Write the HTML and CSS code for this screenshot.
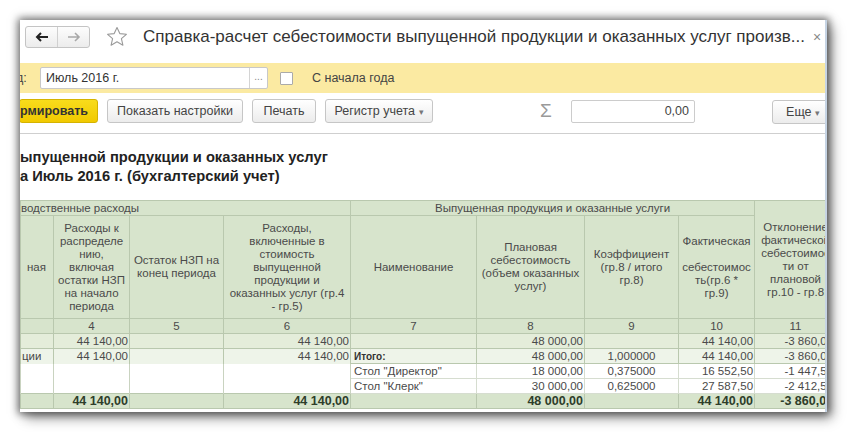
FILE: index.html
```html
<!DOCTYPE html>
<html lang="ru">
<head>
<meta charset="utf-8">
<title>Справка-расчет</title>
<link rel="stylesheet" href="styles.css">
</head>
<body>
<div class="window">
  <div class="titlebar">
    <div class="nav">
      <span class="nav-btn back"><svg width="14" height="10" viewBox="0 0 14 10"><path d="M13 5H3M6 1L2 5l4 4" fill="none" stroke="#222" stroke-width="2"/></svg></span>
      <span class="nav-btn fwd"><svg width="14" height="10" viewBox="0 0 14 10"><path d="M1 5h10M8 1l4 4-4 4" fill="none" stroke="#a8a8a8" stroke-width="1.6"/></svg></span>
    </div>
    <svg class="star" width="22" height="21" viewBox="0 0 22 21"><path d="M11 1.5l2.8 6.1 6.6.7-5 4.4 1.5 6.5L11 15.8l-5.9 3.4 1.5-6.5-5-4.4 6.6-.7z" fill="none" stroke="#9a9a9a" stroke-width="1.1" stroke-linejoin="round"/></svg>
    <div class="title">Справка-расчет себестоимости выпущенной продукции и оказанных услуг произв...</div>
    <span class="close">×</span>
  </div>
  <div class="params">
    <span class="lbl">д:</span>
    <div class="period"><span class="period-val">Июль 2016 г.</span><span class="period-btn">...</span></div>
    <span class="checkbox"></span>
    <span class="chk-lbl">С начала года</span>
  </div>
  <div class="toolbar">
    <span class="btn btn-main">рмировать</span>
    <span class="btn btn-settings">Показать настройки</span>
    <span class="btn btn-print">Печать</span>
    <span class="btn btn-reg">Регистр учета <span class="caret">▾</span></span>
    <span class="sigma">Σ</span>
    <span class="sum">0,00</span>
    <span class="btn btn-more">Еще <span class="caret">▾</span></span>
  </div>
  <div class="report">
    <div class="heading">ыпущенной продукции и оказанных услуг<br>а Июль 2016 г. (бухгалтерский учет)</div>
    <table class="grid">
      <colgroup>
        <col class="c3"><col class="c4"><col class="c5"><col class="c6"><col class="c7"><col class="c8"><col class="c9"><col class="c10"><col class="c11">
      </colgroup>
      <tr class="r1">
        <td colspan="4" class="hd left">водственные расходы</td>
        <td colspan="4" class="hd">Выпущенная продукция и оказанные услуги</td>
        <td rowspan="2" class="hd dev">Отклонение<br>фактической<br>себестоимос<br>ти от<br>плановой<br>гр.10 - гр.8</td>
      </tr>
      <tr class="r2">
        <td class="hd right">ная</td>
        <td class="hd">Расходы к<br>распределе<br>нию,<br>включая<br>остатки НЗП<br>на начало<br>периода</td>
        <td class="hd">Остаток НЗП на<br>конец периода</td>
        <td class="hd">Расходы,<br>включенные в<br>стоимость<br>выпущенной<br>продукции и<br>оказанных услуг (гр.4<br>- гр.5)</td>
        <td class="hd">Наименование</td>
        <td class="hd">Плановая<br>себестоимость<br>(объем оказанных<br>услуг)</td>
        <td class="hd">Коэффициент<br>(гр.8 / итого<br>гр.8)</td>
        <td class="hd">Фактическая<br>&nbsp;<br>себестоимос<br>ть(гр.6 *<br>гр.9)</td>
      </tr>
      <tr class="rn">
        <td></td><td>4</td><td>5</td><td>6</td><td>7</td><td>8</td><td>9</td><td>10</td><td class="dev">11</td>
      </tr>
      <tr class="ra">
        <td></td><td class="num">44 140,00</td><td></td><td class="num">44 140,00</td><td></td><td class="num">48 000,00</td><td></td><td class="num">44 140,00</td><td class="num">-3 860,00</td>
      </tr>
      <tr class="rb">
        <td class="grp">ции</td><td class="num">44 140,00</td><td></td><td class="num">44 140,00</td><td class="itogo">Итого:</td><td class="num">48 000,00</td><td class="ctr">1,000000</td><td class="num">44 140,00</td><td class="num">-3 860,00</td>
      </tr>
      <tr class="rc">
        <td class="nb"></td><td class="nb"></td><td class="nb"></td><td class="nb"></td><td class="name">Стол "Директор"</td><td class="num">18 000,00</td><td class="ctr">0,375000</td><td class="num">16 552,50</td><td class="num">-1 447,50</td>
      </tr>
      <tr class="rc">
        <td class="nb"></td><td class="nb"></td><td class="nb"></td><td class="nb"></td><td class="name">Стол "Клерк"</td><td class="num">30 000,00</td><td class="ctr">0,625000</td><td class="num">27 587,50</td><td class="num">-2 412,50</td>
      </tr>
      <tr class="rt">
        <td></td><td class="num">44 140,00</td><td></td><td class="num">44 140,00</td><td></td><td class="num">48 000,00</td><td></td><td class="num">44 140,00</td><td class="num">-3 860,00</td>
      </tr>
    </table>
  </div>
</div>
</body>
</html>
```
FILE: styles.css
```css
* { box-sizing: border-box; }
html, body { margin: 0; padding: 0; background: #fff; }
body {
  width: 848px; height: 432px; overflow: hidden;
  padding: 20px 0 0 20px;
  font-family: "Liberation Sans", Arial, sans-serif;
  color: #333;
}
.window {
  width: 807px; height: 392px;
  background: #fff;
  overflow: hidden;
  border-right: 2px solid #c6d4e4;
  box-shadow: 0 0 8px 2px rgba(0,0,0,.55), 5px 6px 12px rgba(0,0,0,.4);
}

/* title bar */
.titlebar {
  height: 43px;
  display: flex; align-items: flex-start;
  padding: 6px 0 0 5px;
}
.titlebar > * { flex-shrink: 0; }
.nav {
  display: flex; height: 22px; width: 65px;
  border: 1px solid #c4c4c4; border-radius: 3px;
  background: linear-gradient(#fdfdfd, #ececec);
}
.nav-btn { flex: 1; display: flex; align-items: center; justify-content: center; }
.nav-btn.back { border-right: 1px solid #d0d0d0; }
.star { margin: 0 0 0 16px; }
.title {
  margin: 0 0 0 15px;
  font-size: 17px; line-height: 22px; color: #333;
  white-space: nowrap; width: 660px;
}
.close { margin-left: 10px; font-size: 14px; line-height: 22px; color: #888; }

/* params bar */
.params {
  height: 30px; background: #fbeaa2;
  display: flex; align-items: center;
  font-size: 12.5px; color: #444;
}
.params > * { flex-shrink: 0; }
.lbl { width: 24px; margin-left: -4px; }
.period {
  display: flex; width: 228px; height: 22px;
  border: 1px solid #c8c8c8; border-radius: 2px; background: #fff;
}
.period-val { flex: 1; padding: 3px 0 0 5px; color: #333; }
.period-btn { width: 18px; border-left: 1px solid #d4d4d4; text-align: center; color: #888; font-size: 10px; line-height: 18px; }
.checkbox { width: 13px; height: 13px; margin-left: 12px; border: 1px solid #aaa; background: #fff; border-radius: 1px; }
.chk-lbl { margin-left: 19px; }

/* toolbar */
.toolbar {
  height: 41px;
  display: flex; align-items: flex-start;
  padding-top: 6px;
  border-bottom: 1px solid #cfcfcf;
  font-size: 12.5px;
}
.toolbar > * { flex-shrink: 0; }
.btn {
  height: 24px; line-height: 22px;
  border: 1px solid #c6c6c6; border-radius: 3px;
  background: linear-gradient(#ffffff, #ececec);
  color: #444; text-align: center; white-space: nowrap;
  margin-right: 9px;
}
.btn-main {
  width: 79px; margin-left: -1px;
  background: linear-gradient(#f8dc1c, #f1c900);
  border-color: #d5b300;
  font-weight: bold; color: #333; text-align: left; padding-left: 0;
}
.btn-settings { width: 136px; }
.btn-print { width: 64px; }
.btn-reg { width: 108px; }
.caret { font-size: 9px; color: #777; }
.sigma { margin-left: 98px; width: 31px; font-size: 19px; line-height: 24px; color: #9a9a9a; }
.sum {
  width: 124px; height: 23px; margin-top: 1px;
  border: 1px solid #cccccc; border-radius: 2px;
  text-align: right; padding-right: 5px; line-height: 21px; color: #444;
}
.btn-more { width: 62px; margin-left: 77px; margin-top: 1px; }

/* report */
.report { padding-top: 14px; }
.heading {
  font-size: 14.7px; font-weight: bold; line-height: 19px; color: #222;
  white-space: nowrap; margin-bottom: 14px;
}
.grid {
  border-collapse: collapse; table-layout: fixed; width: 814px;
  font-size: 11.5px; color: #4a4a4a;
}
.c3 { width: 33px; } .c4 { width: 76px; } .c5 { width: 94px; } .c6 { width: 127px; }
.c7 { width: 126px; } .c8 { width: 108px; } .c9 { width: 94px; } .c10 { width: 76px; } .c11 { width: 80px; }
.grid td {
  padding: 0 2px; border: 1px solid #b9c8ae;
  line-height: 13px; text-align: center; vertical-align: middle;
  white-space: nowrap; overflow: hidden;
}
.hd { background: #d7e4cc; }
.grid td.dev { padding-right: 0; }
.grid td.left { text-align: left; padding-left: 0; }
.grid td.right { text-align: right; padding-right: 7px; }
.r1 { height: 15px; }
.r2 { height: 103px; }
.rn, .ra, .rb, .rc, .rt { height: 15px; }
.rn td { background: #d7e4cc; line-height: 13px; }
.ra td { background: #e4edda; }
.rb td { background: #eef4e9; }
.rc td { background: #fff; border-color: #d6ddd0; }
.rc td.nb { border-top: none; border-bottom: none; border-left-color: #c9d3c0; border-right-color: #c9d3c0; }
.rb td:nth-child(-n+4) { border-bottom: none; }
.rt td { background: #d7e4cc; font-weight: bold; color: #2e3d2a; font-size: 12.5px; }
.grid td.num { text-align: right; padding-right: 1px; }
.grid td.ctr { text-align: center; }
.grid td.grp { text-align: left; padding-left: 1px; }
.grid td.itogo { text-align: left; font-weight: bold; font-size: 10px; color: #333; padding-left: 3px; }
.grid td.name { text-align: left; padding-left: 3px; }
```
